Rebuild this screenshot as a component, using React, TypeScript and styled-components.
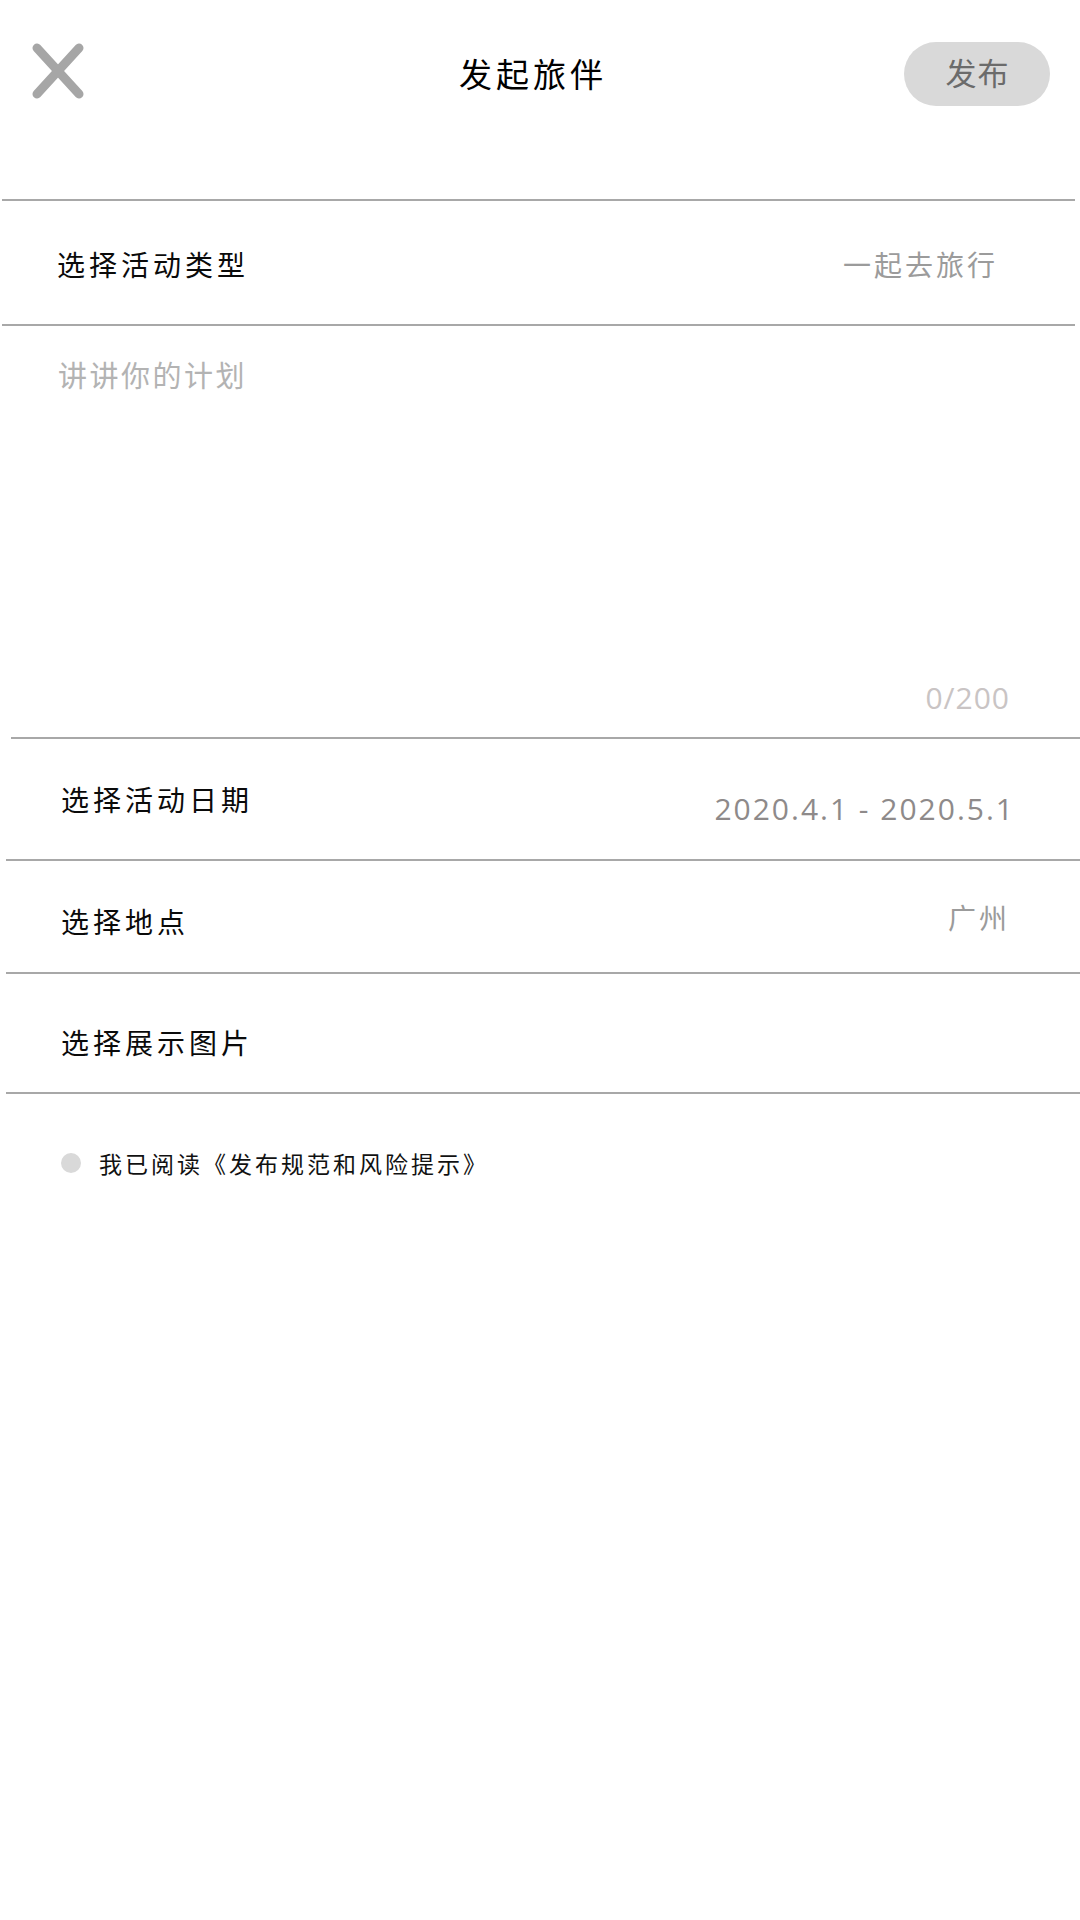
import React from "react";
import styled, { createGlobalStyle } from "styled-components";

const GlobalStyle = createGlobalStyle`
  html, body { margin: 0; padding: 0; background: #ffffff; }
  body { font-family: "Noto Sans CJK SC", "Noto Sans", sans-serif; }
  #root { min-height: 1920px; }
`;

const cjk = `"Noto Sans CJK SC", "Noto Sans", sans-serif`;
const latin = `"Open Sans", "Noto Sans CJK SC", sans-serif`;

const Page = styled.div`
  width: 1080px;
  min-height: 1920px;
  background: #fff;
  display: flex;
  flex-direction: column;
`;

const Header = styled.header`
  height: 199px;
  box-sizing: border-box;
  padding: 42px 30px 0 32px;
  display: grid;
  grid-template-columns: 1fr auto 1fr;
  grid-template-rows: 64px;
  align-content: start;
  align-items: center;
`;

const CloseButton = styled.button`
  justify-self: start;
  align-self: start;
  margin-top: 1px;
  width: 52px;
  height: 56px;
  padding: 0;
  border: 0;
  background: transparent;
  display: flex;
`;

const Title = styled.h1`
  margin: 0;
  padding: 0 16px 2px 0;
  font-family: ${cjk};
  font-weight: 400;
  font-size: 33px;
  line-height: 33px;
  letter-spacing: 4px;
  color: #000;
`;

const PublishButton = styled.button`
  justify-self: end;
  width: 146px;
  height: 64px;
  border: 0;
  border-radius: 32px;
  background: #d9d9d9;
  color: #6b6b6b;
  font-family: ${cjk};
  font-size: 31px;
  line-height: 31px;
  letter-spacing: 1px;
  padding: 0 0 5px 1px;
  display: flex;
  align-items: center;
  justify-content: center;
`;

const Divider = styled.div<{ $left: number; $right: number }>`
  height: 2px;
  background: #a8a8a8;
  margin-left: ${(p) => p.$left}px;
  margin-right: ${(p) => p.$right}px;
`;

const Row = styled.div<{ $h: number; $shift?: number; $left: number; $right: number }>`
  height: ${(p) => p.$h}px;
  box-sizing: border-box;
  padding: ${(p) => p.$shift ?? 0}px ${(p) => p.$right}px 0 ${(p) => p.$left}px;
  display: flex;
  align-items: center;
  justify-content: space-between;
`;

const Label = styled.span`
  font-family: ${cjk};
  font-size: 28px;
  line-height: 28px;
  letter-spacing: 4px;
  color: #0a0a0a;
`;

const Value = styled.span<{ $dy?: number }>`
  font-family: ${cjk};
  font-size: 28px;
  line-height: 28px;
  letter-spacing: 3px;
  color: #9b9b9b;
  margin-top: ${(p) => ((p.$dy ?? 0) > 0 ? (p.$dy ?? 0) * 2 : 0)}px;
  margin-bottom: ${(p) => ((p.$dy ?? 0) < 0 ? -(p.$dy ?? 0) * 2 : 0)}px;
`;

const DateValue = styled(Value)`
  font-family: ${latin};
  font-size: 30px;
  line-height: 30px;
  letter-spacing: 2px;
  color: #8e8a8a;
`;

const PlanArea = styled.div`
  height: 411px;
  box-sizing: border-box;
  padding: 34px 70px 24px 58px;
  display: flex;
  flex-direction: column;
  justify-content: space-between;
`;

const Placeholder = styled.span`
  font-family: ${cjk};
  font-size: 29px;
  line-height: 29px;
  letter-spacing: 2.5px;
  color: #b3b3b3;
`;

const Counter = styled.span`
  align-self: flex-end;
  font-family: ${latin};
  font-size: 30px;
  line-height: 30px;
  letter-spacing: 1px;
  color: #c9c4c4;
`;

const Agreement = styled.label`
  display: flex;
  align-items: center;
  gap: 18px;
  padding: 57px 0 0 61px;
`;

const Radio = styled.span`
  width: 20px;
  height: 20px;
  border-radius: 50%;
  background: #d9d9d9;
  flex: none;
`;

const AgreementText = styled.span`
  font-family: ${cjk};
  font-size: 23px;
  line-height: 24px;
  letter-spacing: 3px;
  color: #111;
`;

function CloseIcon() {
  return (
    <svg width="52" height="56" viewBox="0 0 52 56" aria-hidden="true">
      <g stroke="#a6a6a6" strokeWidth="9" strokeLinecap="round">
        <line x1="5" y1="5" x2="47" y2="51" />
        <line x1="47" y1="5" x2="5" y2="51" />
      </g>
    </svg>
  );
}

export default function App() {
  return (
    <Page>
      <GlobalStyle />
      <Header>
        <CloseButton aria-label="关闭">
          <CloseIcon />
        </CloseButton>
        <Title>发起旅伴</Title>
        <PublishButton>发布</PublishButton>
      </Header>
      <Divider $left={2} $right={5} />
      <Row $h={123} $shift={3} $left={57} $right={82}>
        <Label>选择活动类型</Label>
        <Value>一起去旅行</Value>
      </Row>
      <Divider $left={2} $right={5} />
      <PlanArea>
        <Placeholder>讲讲你的计划</Placeholder>
        <Counter>0/200</Counter>
      </PlanArea>
      <Divider $left={11} $right={0} />
      <Row $h={120} $left={61} $right={65}>
        <Label>选择活动日期</Label>
        <DateValue $dy={10}>2020.4.1 - 2020.5.1</DateValue>
      </Row>
      <Divider $left={6} $right={0} />
      <Row $h={111} $shift={8} $left={61} $right={70}>
        <Label>选择地点</Label>
        <Value $dy={-4}>广州</Value>
      </Row>
      <Divider $left={6} $right={0} />
      <Row $h={118} $shift={18} $left={61} $right={70}>
        <Label>选择展示图片</Label>
      </Row>
      <Divider $left={6} $right={0} />
      <Agreement>
        <Radio />
        <AgreementText>我已阅读《发布规范和风险提示》</AgreementText>
      </Agreement>
    </Page>
  );
}
